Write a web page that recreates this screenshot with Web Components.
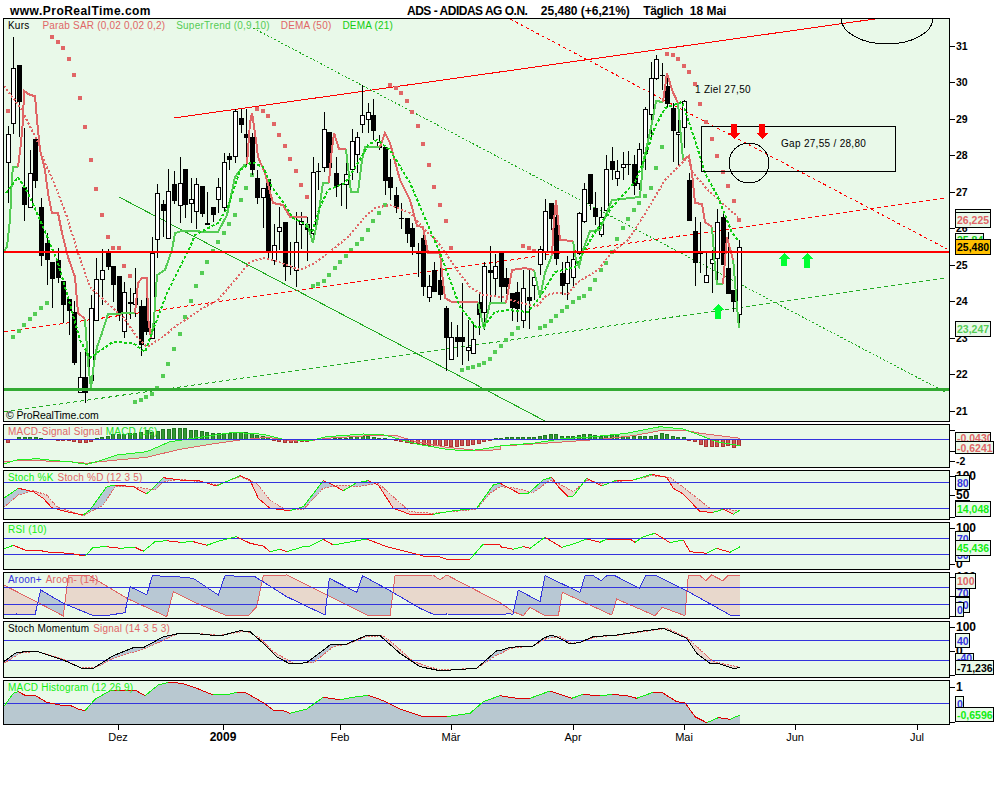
<!DOCTYPE html>
<html lang="de">
<head>
<meta charset="utf-8">
<title>ADS - ADIDAS AG O.N.</title>
<style>
  html, body { margin: 0; background: #fff; }
</style>
</head>
<body>
<chart-page>
  <chart-header></chart-header>

  <chart-pane name="main" top="18" height="404">
    <pane-legend gap="11">
      <span style="color:#000;margin-right:2px">Kurs</span>
      <span style="color:#e06666">Parab SAR (0,02 0,02 0,2)</span>
      <span style="color:#55cc55">SuperTrend (0,9 10)</span>
      <span style="color:#e06666">DEMA (50)</span>
      <span style="color:#11cc11">DEMA (21)</span>
    </pane-legend>
    <axis-mark slot="axis" y="46">31</axis-mark>
    <axis-mark slot="axis" y="82">30</axis-mark>
    <axis-mark slot="axis" y="119">29</axis-mark>
    <axis-mark slot="axis" y="155">28</axis-mark>
    <axis-mark slot="axis" y="192">27</axis-mark>
    <axis-mark slot="axis" y="228">26</axis-mark>
    <axis-mark slot="axis" y="265">25</axis-mark>
    <axis-mark slot="axis" y="301">24</axis-mark>
    <axis-mark slot="axis" y="338">23</axis-mark>
    <axis-mark slot="axis" y="374">22</axis-mark>
    <axis-mark slot="axis" y="411">21</axis-mark>
    <value-badge slot="axis" y="209" h="8" color="#e06666"></value-badge>
    <value-badge slot="axis" y="212" h="16" color="#e06666">26,225</value-badge>
    <value-badge slot="axis" y="233" h="14" w="29" color="#11cc11">25,84</value-badge>
    <value-badge slot="axis" y="239" h="16" color="#000" bg="#ffc000">25,480</value-badge>
    <value-badge slot="axis" y="321" h="16" color="#55cc55">23,247</value-badge>
  </chart-pane>

  <chart-pane name="macd" top="424" height="44">
    <pane-legend gap="3">
      <span style="color:#e06666">MACD-Signal</span>
      <span style="color:#e06666">Signal</span>
      <span style="color:#22dd22">MACD (16)</span>
    </pane-legend>
    <axis-mark slot="axis" y="430"></axis-mark>
    <axis-mark slot="axis" y="451"></axis-mark>
    <axis-mark slot="axis" y="461">-2</axis-mark>
    <value-badge slot="axis" y="432" h="12" color="#e06666">-0,0430</value-badge>
    <value-badge slot="axis" y="441" h="13" w="39" color="#e06666">-0,6241</value-badge>
  </chart-pane>

  <chart-pane name="stoch" top="470" height="50">
    <pane-legend gap="4">
      <span style="color:#11ee11">Stoch %K</span>
      <span style="color:#e06666">Stoch %D (12 3 5)</span>
    </pane-legend>
    <axis-mark slot="axis" y="476" big>100</axis-mark>
    <axis-mark slot="axis" y="495" big>50</axis-mark>
    <axis-mark slot="axis" y="517"></axis-mark>
    <value-badge slot="axis" y="475" h="15" w="15" color="#3333dd">80</value-badge>
    <value-badge slot="axis" y="500" h="6" w="15" color="#3333dd"></value-badge>
    <value-badge slot="axis" y="501" h="16" color="#11ee11">14,048</value-badge>
  </chart-pane>

  <chart-pane name="rsi" top="522" height="48">
    <pane-legend>
      <span style="color:#11ee11">RSI (10)</span>
    </pane-legend>
    <axis-mark slot="axis" y="528" big>100</axis-mark>
    <axis-mark slot="axis" y="564" big>0</axis-mark>
    <value-badge slot="axis" y="531" h="15" w="15" color="#3333dd">70</value-badge>
    <value-badge slot="axis" y="547" h="15" w="15" color="#3333dd">30</value-badge>
    <value-badge slot="axis" y="540" h="16" color="#11ee11">45,436</value-badge>
  </chart-pane>

  <chart-pane name="aroon" top="572" height="47">
    <pane-legend gap="4">
      <span style="color:#3333dd">Aroon+</span>
      <span style="color:#e06666">Aroon- (14)</span>
    </pane-legend>
    <axis-mark slot="axis" y="577" big>100</axis-mark>
    <axis-mark slot="axis" y="596"></axis-mark>
    <axis-mark slot="axis" y="616"></axis-mark>
    <value-badge slot="axis" y="588" h="9" w="15" color="#3333dd">70</value-badge>
    <value-badge slot="axis" y="597" h="16" w="15" color="#3333dd">30</value-badge>
    <value-badge slot="axis" y="602" h="15" w="9" color="#3333dd">0</value-badge>
    <value-badge slot="axis" y="573" h="16" w="21" color="#e06666">100</value-badge>
  </chart-pane>

  <chart-pane name="mom" top="621" height="57">
    <pane-legend gap="4">
      <span style="color:#000">Stoch Momentum</span>
      <span style="color:#e06666">Signal (14 3 5 3)</span>
    </pane-legend>
    <axis-mark slot="axis" y="627" big>100</axis-mark>
    <axis-mark slot="axis" y="651" big>0</axis-mark>
    <axis-mark slot="axis" y="675"></axis-mark>
    <value-badge slot="axis" y="633" h="15" w="15" color="#3333dd">40</value-badge>
    <value-badge slot="axis" y="653" h="10" w="19" color="#3333dd">-40</value-badge>
    <value-badge slot="axis" y="660" h="15" w="39" color="#000">-71,236</value-badge>
  </chart-pane>

  <chart-pane name="hist" top="680" height="45">
    <pane-legend>
      <span style="color:#11ee11">MACD Histogram (12 26 9)</span>
    </pane-legend>
    <axis-mark slot="axis" y="687" big>1</axis-mark>
    <axis-mark slot="axis" y="722"></axis-mark>
    <value-badge slot="axis" y="696" h="15" w="9" color="#3333dd">0</value-badge>
    <value-badge slot="axis" y="707" h="15" w="39" color="#11ee11">-0,6596</value-badge>
  </chart-pane>

  <date-axis></date-axis>
</chart-page>

<script>
const PINK = "#e06666";
const SOFT_GREEN = "#55cc55";
const DEMA_GREEN = "#11cc11";
const BLUE = "#3333dd";
const UP = "#11ee11";
const DOWN = "#ee1111";

// all curves are written in 3x crop coordinates, then moved back onto the page
const crop = (ox, oy, pts) => pts.map(([x, y]) => [ox + x / 3, oy + y / 3]);
const barX = (i) => 8 + 5.54 * i;

function yAt(pts, x) {
  if (x <= pts[0][0]) return pts[0][1];
  for (let i = 1; i < pts.length; i++) {
    if (x <= pts[i][0]) {
      const [x0, y0] = pts[i - 1];
      const [x1, y1] = pts[i];
      return x1 === x0 ? y1 : y0 + ((y1 - y0) * (x - x0)) / (x1 - x0);
    }
  }
  return pts[pts.length - 1][1];
}

function line(pts, color, width = 1, dash = "") {
  const d = pts.map((p) => p[0].toFixed(1) + "," + p[1].toFixed(1)).join(" ");
  return `<polyline points="${d}" fill="none" stroke="${color}" stroke-width="${width}" stroke-dasharray="${dash}"/>`;
}

function seg(x1, y1, x2, y2, color, width = 1, dash = "") {
  return `<line x1="${x1}" y1="${y1}" x2="${x2}" y2="${y2}" stroke="${color}" stroke-width="${width}" stroke-dasharray="${dash}"/>`;
}

// green on the way up, red on the way down
function trendLine(pts, up = UP, down = DOWN) {
  let out = "";
  for (let i = 1; i < pts.length; i++) {
    out += line([pts[i - 1], pts[i]], pts[i][1] < pts[i - 1][1] ? up : down, 1);
  }
  return out;
}

// column fill between two curves, colour depends on which one is on top
function band(a, b, colA, colB, x0, x1) {
  let pa = "", pb = "";
  for (let x = x0; x < x1; x++) {
    const ya = yAt(a, x + 0.5);
    const yb = yAt(b, x + 0.5);
    const rect = `M${x} ${Math.min(ya, yb).toFixed(1)}h1V${Math.max(ya, yb).toFixed(1)}h-1z`;
    if (ya < yb) pa += rect; else pb += rect;
  }
  return `<path d="${pa}" fill="${colA}"/><path d="${pb}" fill="${colB}"/>`;
}

function hLine(y, x1 = 4, x2 = 949, color = BLUE, width = 1) {
  return `<rect x="${x1}" y="${y}" width="${x2 - x1}" height="${width}" fill="${color}"/>`;
}

function arrow(x, y1, y2, color) {
  const dir = y2 > y1 ? 1 : -1;
  const neck = y2 - dir * 6;
  return `<polygon points="${x - 3},${y1} ${x + 3},${y1} ${x + 3},${neck} ${x + 6},${neck} ${x},${y2} ${x - 6},${neck} ${x - 3},${neck}" fill="${color}"/>`;
}

// x, high, body top, body bottom, low, black?
const CANDLES = [
  [8,126,134,162,203,0],[13,37,68,123,134,0],[19,65,65,102,137,1],[24,128,187,205,221,1],[30,150,173,207,207,0],
  [35,139,139,181,188,1],[41,198,207,256,266,1],[47,233,243,260,285,1],[52,262,262,279,308,1],[58,248,260,278,283,1],
  [63,281,281,305,323,1],[69,299,299,311,335,1],[74,301,312,363,365,1],[80,352,377,392,392,0],[85,352,377,393,403,1],
  [91,295,308,380,380,0],[96,258,279,320,320,0],[102,249,270,279,305,0],[108,249,253,267,270,1],[113,266,266,285,302,1],
  [119,276,276,313,321,1],[124,282,292,331,338,0],[130,288,302,304,319,1],[135,268,293,304,317,0],[141,300,306,345,356,1],
  [146,295,306,332,335,1],[152,237,253,338,338,0],[157,184,193,239,258,0],[163,200,204,211,237,1],[168,169,191,238,238,0],
  [174,171,184,201,204,1],[180,157,183,205,223,0],[185,169,169,205,218,1],[191,178,199,203,223,0],[196,178,184,211,229,0],
  [202,186,186,214,217,1],[207,192,223,225,225,1],[213,207,207,215,222,1],[218,178,187,199,213,0],[224,153,162,207,212,0],
  [229,153,156,160,170,1],[235,109,111,156,163,0],[241,109,118,125,133,1],[246,109,134,138,165,1],[252,133,137,170,175,1],
  [257,170,178,198,204,1],[263,188,188,197,228,0],[268,179,179,253,260,1],[274,224,245,260,265,0],[279,207,227,231,250,0],
  [285,222,222,267,281,1],[290,242,266,267,275,1],[296,212,242,270,287,0],[301,212,221,224,249,0],[307,217,224,230,261,1],
  [313,157,172,233,242,0],[318,163,171,172,190,1],[324,112,129,167,172,0],[329,132,132,168,173,1],[336,157,173,187,197,1],
  [341,183,184,185,206,1],[346,158,174,184,209,0],[352,129,141,169,180,0],[357,132,137,154,173,0],[362,85,115,124,133,0],
  [368,103,112,119,133,0],[373,99,115,131,140,1],[379,135,142,147,150,0],[385,147,147,181,195,1],[390,159,177,188,200,1],
  [396,187,195,208,213,1],[401,203,218,219,229,1],[407,218,218,234,243,1],[412,223,228,247,255,1],[418,243,253,254,277,1],
  [423,233,238,287,296,1],[429,275,286,297,302,0],[434,262,270,292,292,1],[440,255,280,295,300,1],[446,306,308,338,371,1],
  [451,322,337,359,360,0],[457,325,337,342,357,1],[462,283,337,342,365,1],[468,320,347,350,361,0],[473,324,339,353,353,0],
  [479,293,302,315,335,1],[484,262,266,312,330,0],[490,246,270,273,303,1],[495,254,266,278,297,0],[501,253,253,287,303,1],
  [506,268,278,287,294,1],[512,293,293,308,321,1],[517,282,292,309,322,1],[523,270,288,320,328,0],[529,270,297,301,329,1],
  [534,271,277,285,300,0],[540,246,249,264,275,0],[545,199,211,251,260,0],[551,203,203,219,230,1],[556,210,217,259,265,1],
  [562,262,273,286,295,1],[567,256,262,283,300,0],[573,248,259,277,288,0],[579,212,213,253,255,0],[584,183,189,221,223,0],
  [590,174,174,204,210,1],[595,192,208,217,225,1],[601,207,217,234,237,0],[606,155,169,210,212,0],[612,147,161,170,180,1],
  [617,160,171,178,186,0],[623,152,164,167,180,0],[628,151,164,165,175,1],[634,155,164,186,195,1],[639,143,149,183,190,0],
  [645,107,109,153,170,0],[651,62,78,114,137,0],[656,55,59,78,80,0],[662,63,75,76,90,1],[667,73,86,104,108,1],
  [673,103,108,131,162,1],[678,103,132,134,165,0],[684,100,101,127,148,0],[689,173,180,221,221,1],[695,217,231,263,286,1],
  [700,222,253,254,273,1],[706,253,275,282,282,0],[712,250,259,263,293,0],[717,209,222,258,280,0],[723,213,217,265,265,1],
  [728,232,268,294,294,1],[733,290,290,302,312,1],[739,240,247,314,328,0]
];

const SAR_RED = [[8,111],[52,37],[58,42],[63,48],[69,59],[74,75],[80,98],[85,127],[91,160],[96,189],[102,215],[108,237],[113,248],[119,248],[124,266],[130,276],
  [257,109],[263,111],[268,116],[274,124],[279,135],[285,146],[290,159],[296,171],[301,185],[307,197],
  [390,85],[396,88],[401,93],[407,101],[412,112],[418,126],[423,144],[429,165],[434,187],[440,205],[446,221],[451,248],
  [523,246],[529,248],[534,251],
  [667,54],[673,55],[678,59],[684,66],[689,72],[695,84],[700,104],[706,122],[712,139],[717,156],[723,172],[728,186],[734,201],[739,220]];

const SAR_GREEN = [[13,337],[19,331],[24,325],[30,319],[35,314],[41,308],[47,303],
  [135,402],[141,400],[146,397],[152,394],[157,388],[163,376],[168,364],[174,349],[180,334],[185,317],[191,301],[196,286],[202,273],[207,262],[213,251],[218,242],[224,233],[229,224],[235,215],[241,200],[246,188],[252,175],
  [313,286],[318,284],[324,281],[329,275],[335,268],[340,262],[346,256],[351,250],[357,244],[362,239],[368,230],[373,221],[379,213],[385,205],
  [462,370],[468,368],[473,367],[479,365],[484,363],[490,359],[495,352],[501,346],[506,340],[512,334],[518,328],
  [540,328],[545,326],[551,321],[556,316],[562,311],[567,307],[573,302],[579,298],[584,296],[590,289],[595,280],[601,270],[606,263],[612,252],[617,239],[623,228],[628,219],[634,210],[639,203],[645,196],[651,188],[656,168],[662,147]];

// SuperTrend flips between its green and red pieces
const TREND_GREEN = [
  [[4,251],[7,247],[10,220],[12,177],[13,167],[18,167]],
  [[85,319],[88,363],[91,388],[94,363],[97,347],[102,333],[108,314],[135,313]],
  [[151,338],[154,320],[157,275],[165,270],[172,250],[175,233],[182,231],[218,232],[227,215],[235,177],[245,164]],
  [[307,223],[313,243],[318,217],[323,183],[329,183]],
  [[346,149],[348,167],[351,192],[358,192],[362,160],[365,147],[380,147]],
  [[478,302],[484,329],[490,303],[506,303]],
  [[534,270],[540,297],[545,273],[552,255]],
  [[573,241],[576,260],[579,267],[583,250],[590,231],[600,230],[612,200],[640,197],[643,163],[652,123],[656,101],[663,102]],
  [[678,103],[683,160]],
  [[712,227],[715,267],[717,284],[723,284]],
  [[733,258],[737,307],[739,328]]
];
const TREND_RED = [
  [[18,167],[21,143],[23,120],[24,91],[30,95],[35,96],[37,120],[40,150],[45,170],[48,193],[52,213],[58,213],[62,233],[68,257],[75,277],[78,313],[85,319]],
  [[135,313],[138,283],[142,278],[147,278],[148,317],[151,338]],
  [[247,164],[250,123],[252,113],[256,140],[258,157],[265,173],[273,203],[283,205],[290,217],[307,217]],
  [[329,183],[331,157],[334,133],[339,149],[346,149]],
  [[380,147],[385,133],[390,143],[400,180],[410,200],[417,226],[423,227],[428,253],[440,253],[442,273],[445,298],[452,302],[478,302]],
  [[506,303],[512,270],[525,268],[534,270]],
  [[552,255],[554,220],[556,200],[558,220],[560,240],[573,241]],
  [[663,102],[667,73],[672,90],[678,103]],
  [[683,160],[689,156],[692,173],[695,203],[702,204],[705,222],[712,227]],
  [[723,284],[727,237],[733,260]]
];

const DEMA50 = [[4,86],[20,107],[37,140],[43,158],[57,190],[67,217],[78,253],[90,287],[107,303],[123,317],[137,337],[147,347],[163,337],[177,325],[190,317],[203,308],[218,300],[235,280],[250,262],[265,258],[282,263],[300,270],[315,263],[332,250],[348,237],[365,217],[375,208],[390,205],[410,213],[425,230],[438,242],[457,270],[470,287],[483,295],[503,297],[520,303],[537,306],[547,295],[555,293],[568,294],[578,282],[598,270],[612,252],[628,240],[643,217],[655,197],[665,180],[688,157],[692,172],[708,190],[722,203],[738,217]];
const DEMA21 = [[6,193],[18,177],[28,193],[40,220],[57,260],[68,297],[80,340],[90,358],[97,353],[113,342],[133,343],[145,352],[153,330],[167,293],[190,247],[195,235],[218,223],[228,207],[240,170],[252,162],[263,167],[272,187],[285,205],[293,218],[303,223],[312,232],[320,207],[328,190],[345,183],[358,163],[368,145],[377,140],[390,150],[410,183],[430,230],[440,253],[450,280],[460,307],[477,328],[485,325],[495,312],[508,310],[528,312],[540,297],[555,272],[575,267],[592,237],[612,207],[635,182],[643,163],[655,127],[665,108],[682,102],[695,140],[705,173],[718,197],[732,233],[739,241]];

function drawMain() {
  let s = "";
  s += seg(174, 118, 903, 15, "#ff0000", 1);
  s += seg(510, 19, 947, 249, "#ff0000", 1, "3 3");
  s += seg(4, 332, 947, 198, "#ff0000", 1, "4 3");
  s += seg(253, 28, 947, 393, "#22aa22", 1, "2 2");
  s += seg(4, 412, 947, 278, "#22aa22", 1, "4 3");
  s += seg(119, 197, 545, 421, "#22aa22", 1);
  for (const [x, y] of SAR_RED) s += `<rect x="${x - 2}" y="${y - 2}" width="4" height="4" fill="${PINK}"/>`;
  for (const [x, y] of SAR_GREEN) s += `<rect x="${x - 2}" y="${y - 2}" width="4" height="4" fill="${SOFT_GREEN}"/>`;
  for (const [x, high, top, bottom, low, black] of CANDLES) {
    s += seg(x + 0.5, high, x + 0.5, low, "#000");
    s += black
      ? `<rect x="${x - 2}" y="${top}" width="5" height="${Math.max(bottom - top, 1)}" fill="#000"/>`
      : `<rect x="${x - 1.5}" y="${top + 0.5}" width="4" height="${bottom - top}" fill="#fff" stroke="#000"/>`;
  }
  s += line(DEMA50, PINK, 2, "2 2");
  for (const p of TREND_GREEN) s += line(p, SOFT_GREEN, 2);
  for (const p of TREND_RED) s += line(p, PINK, 2);
  s += line(DEMA21, DEMA_GREEN, 2, "3 2");
  s += hLine(251, 4, 949, "#ff0000", 2);
  s += hLine(388, 4, 949, "#33aa33", 3);
  s += `<ellipse cx="887" cy="18" rx="46" ry="26" fill="none" stroke="#000"/>`;
  s += `<circle cx="749" cy="163" r="20" fill="none" stroke="#000"/>`;
  s += `<rect x="701.5" y="126.5" width="194" height="45" fill="none" stroke="#000"/>`;
  s += arrow(734, 124, 139, "#ff0000") + arrow(762, 124, 139, "#ff0000");
  s += arrow(784, 266, 253, "#00ff33") + arrow(807, 268, 253, "#00ff33") + arrow(718, 319, 304, "#00ff33");
  s += `<text x="695" y="93" class="note">1 Ziel 27,50</text>`;
  s += `<text x="781" y="147" class="note">Gap 27,55 / 28,80</text>`;
  s += `<text x="6" y="419" class="mark">© ProRealTime.com</text>`;
  return s;
}

// bar height above (+) or below (-) the zero line, one value per session
const MACD_BARS = [-3,0,2,2,2,2,1,0,0,-1,-1,-1,-2,-3,-3,-2,1,2,3,5,5,5,6,6,7,9,7,8,10,10,11,11,11,9,9,8,7,6,6,6,6,7,7,7,6,4,3,2,-1,-2,-3,-3,-3,-2,-2,-1,0,1,1,1,1,1,2,3,3,3,2,1,1,0,-1,-2,-3,-4,-4,-5,-6,-6,-6,-6,-7,-7,-6,-6,-5,-4,-2,-1,1,1,2,2,2,2,2,2,3,4,5,5,3,3,3,4,5,5,4,3,4,5,5,3,3,3,3,3,3,4,6,5,3,2,2,-1,-2,-5,-7,-7,-7,-7,-6,-8,-6];

function drawMacd() {
  const green = crop(0, 420, [[11,132],[50,120],[110,116],[165,122],[210,125],[260,133],[300,122],[350,105],[440,95],[510,65],[600,52],[700,37],[790,43],[850,58],[930,62],[980,50],[1090,42],[1150,44],[1250,72],[1340,88],[1400,93],[1450,87],[1500,78]])
    .concat(crop(500, 420, [[0,77],[100,70],[180,57],[280,50],[380,40],[480,20],[550,27],[590,42],[650,65],[720,77]]));
  const pink = crop(0, 420, [[11,125],[50,122],[110,122],[165,124],[210,125],[260,130],[300,125],[350,120],[440,112],[540,88],[650,70],[720,60],[800,52],[860,60],[930,62],[980,55],[1090,48],[1190,47],[1250,65],[1340,82],[1450,93],[1500,88]])
    .concat(crop(500, 420, [[0,78],[100,72],[200,65],[300,58],[400,47],[480,32],[550,30],[600,40],[720,55]]));
  let s = band(green, pink, "#bdeebd", "#e8d8d0", 4, 740);
  MACD_BARS.forEach((v, i) => {
    if (!v) return;
    const x = Math.round(barX(i)) - 2;
    s += v > 0
      ? `<rect x="${x + 0.5}" y="${439.5 - v}" width="3" height="${v}" fill="#339933" stroke="#227722"/>`
      : `<rect x="${x + 0.5}" y="439.5" width="3" height="${-v}" fill="#cc5555" stroke="#aa3333"/>`;
  });
  s += line(pink, PINK, 1) + line(green, "#22ee22", 1);
  s += hLine(439);
  return s;
}

function drawStoch() {
  const k = crop(0, 420, [[11,235],[55,205],[100,215],[130,235],[155,263],[200,275],[250,285],[270,270],[320,200],[345,195],[400,200],[440,222],[490,173],[540,180],[600,183],[650,198],[690,180],[720,167],[750,180],[775,235],[810,265],[870,272],[910,260],[970,182],[1000,195],[1030,212],[1070,188],[1105,182],[1135,195],[1180,265],[1230,283],[1300,283],[1360,272],[1430,265],[1480,195],[1500,190]])
    .concat(crop(500, 420, [[20,200],[60,222],[85,220],[130,180],[155,172],[175,200],[205,230],[220,228],[260,175],[305,198],[350,180],[400,180],[455,163],[500,172],[520,205],[550,222],[600,275],[640,277],[670,268],[700,283],[720,270]]));
  const d = crop(0, 420, [[11,262],[55,225],[100,212],[140,225],[170,260],[250,287],[310,255],[345,200],[400,200],[465,210],[490,185],[540,178],[600,185],[650,195],[720,170],[770,190],[810,240],[850,265],[910,268],[970,205],[1020,195],[1070,200],[1135,190],[1190,240],[1230,275],[1300,280],[1430,268],[1470,220],[1500,200]])
    .concat(crop(500, 420, [[50,205],[100,218],[150,180],[175,190],[220,215],[260,180],[300,190],[350,185],[400,180],[455,167],[510,172],[560,210],[630,265],[720,272]]));
  let s = band(k, d, "#b8c8d4", "#e8d8d0", 4, 740);
  s += line(d, PINK, 1, "2 1") + trendLine(k);
  s += hLine(482) + hLine(508);
  return s;
}

function drawRsi() {
  const r = crop(0, 420, [[11,387],[40,376],[75,390],[110,390],[150,397],[210,400],[255,408],[280,382],[320,380],[360,385],[405,382],[430,394],[465,365],[500,362],[540,367],[580,365],[620,376],[660,362],[710,350],[750,370],[790,378],[810,395],[840,388],[860,395],[910,380],[930,378],[970,358],[1000,375],[1100,357],[1160,380],[1240,400],[1270,408],[1310,408],[1340,418],[1410,418],[1450,372],[1500,375]])
    .concat(crop(500, 420, [[0,380],[40,388],[70,380],[90,385],[135,352],[185,382],[220,372],[260,357],[300,367],[320,357],[390,357],[405,367],[430,350],[465,340],[510,368],[550,360],[570,395],[620,400],[650,385],[690,397],[720,380]]));
  return hLine(538) + hLine(554) + trendLine(r);
}

function drawAroon() {
  const plus = crop(0, 420, [[11,585],[50,582],[95,583],[105,585],[122,510],[190,550],[275,585],[330,585],[375,578],[390,500],[440,525],[457,467],[530,470],[580,475],[655,525],[675,467],[765,470],[860,530],[975,585],[988,475],[1070,517],[1088,467],[1175,515],[1260,565],[1305,585],[1340,582],[1500,585]])
    .concat(crop(500, 420, [[30,580],[38,585],[55,510],[120,545],[135,467],[240,517],[255,467],[280,467],[303,482],[320,467],[345,467],[418,505],[437,467],[470,467],[560,512],[690,585],[720,585]]));
  const minus = crop(0, 420, [[11,495],[115,548],[190,588],[205,467],[265,465],[385,537],[500,590],[520,515],[590,550],[680,587],[745,587],[770,560],[790,467],[860,465],[980,525],[1100,585],[1170,587],[1185,467],[1300,465],[1320,480],[1340,465],[1500,548]])
    .concat(crop(500, 420, [[40,575],[70,587],[90,562],[135,587],[175,587],[187,517],[335,585],[350,537],[465,587],[487,562],[555,587],[565,467],[600,467],[618,482],[635,465],[668,482],[685,465],[720,465]]));
  let s = band(plus, minus, "#b8c8d4", "#e8d8cc", 4, 740);
  s += line(minus, PINK, 1) + line(plus, BLUE, 1);
  s += hLine(587) + hLine(604);
  return s;
}

function drawMom() {
  const black = crop(0, 610, [[11,155],[50,127],[110,124],[190,150],[250,177],[280,175],[340,137],[400,113],[430,113],[490,80],[540,70],[600,72],[660,78],[720,62],[750,65],[790,100],[830,140],[870,162],[920,158],[990,105],[1040,102],[1100,76],[1140,77],[1200,130],[1260,170],[1320,182],[1430,175],[1490,122],[1500,122]])
    .concat(crop(500, 610, [[30,112],[100,108],[130,85],[155,75],[180,85],[210,102],[240,97],[280,80],[350,75],[430,63],[490,55],[560,85],[590,130],[630,160],[660,162],[700,175],[720,173]]));
  const pink = crop(0, 610, [[11,160],[60,130],[110,124],[190,148],[240,173],[290,172],[340,145],[430,117],[470,100],[530,72],[600,71],[660,76],[740,63],[780,85],[820,125],[880,160],[940,158],[1000,110],[1040,103],[1100,80],[1150,77],[1190,110],[1240,155],[1320,180],[1430,175],[1490,135],[1500,132]])
    .concat(crop(500, 610, [[30,115],[100,108],[140,85],[180,80],[215,100],[250,95],[280,82],[350,76],[430,65],[500,55],[560,82],[640,155],[720,172]]));
  let s = band(black, pink, "#b8c8d4", "#e8d8d0", 4, 740);
  s += hLine(640) + hLine(660);
  s += line(pink, PINK, 1, "2 1") + line(black, "#000", 1);
  return s;
}

function drawHist() {
  const h = crop(0, 610, [[11,290],[40,250],[55,245],[75,256],[105,256],[140,277],[180,285],[210,286],[235,297],[255,302],[285,268],[330,242],[410,243],[435,257],[475,225],[505,217],[545,220],[590,235],[640,255],[690,252],[710,247],[735,247],[790,278],[820,300],[850,302],[870,310],[920,297],[970,262],[1020,269],[1060,262],[1105,256],[1150,272],[1200,297],[1270,320],[1340,320],[1410,310],[1450,275],[1500,257]])
    .concat(crop(500, 610, [[50,265],[90,265],[150,243],[215,265],[250,253],[300,258],[335,253],[380,257],[410,265],[460,247],[485,247],[530,275],[555,278],[585,320],[620,338],[655,323],[690,328],[720,315]]));
  const area = h.concat([[740, 724], [4, 724]]);
  const d = area.map((p) => p[0].toFixed(1) + "," + p[1].toFixed(1)).join(" ");
  return `<polygon points="${d}" fill="#b8c8d0"/>` + hLine(703) + trendLine(h, UP, "#dd0000");
}

const DRAWINGS = { main: drawMain, macd: drawMacd, stoch: drawStoch, rsi: drawRsi, aroon: drawAroon, mom: drawMom, hist: drawHist };

class ChartPage extends HTMLElement {
  constructor() {
    super();
    this.attachShadow({ mode: "open" });
    this.shadowRoot.innerHTML = `
      <style>
        :host {
          display: flex;
          flex-direction: column;
          gap: 2px;
          width: 1000px;
          height: 800px;
          padding-left: 3px;
          box-sizing: border-box;
          overflow: hidden;
          font-family: "Liberation Sans", Arial, sans-serif;
        }
      </style>
      <slot></slot>
    `;
  }
}

class ChartHeader extends HTMLElement {
  constructor() {
    super();
    this.attachShadow({ mode: "open" });
    this.shadowRoot.innerHTML = `
      <style>
        :host {
          display: grid;
          grid-template-columns: 404px 1fr;
          align-items: center;
          box-sizing: border-box;
          height: 16px;
          padding-top: 4px;
          font: bold 12px "Liberation Sans", Arial, sans-serif;
          color: #000;
          white-space: pre;
        }
        .site { padding-left: 7px; letter-spacing: 0.47px; }
        .name { letter-spacing: -0.5px; }
        .period { letter-spacing: -0.3px; }
      </style>
      <span class="site">www.ProRealTime.com</span>
      <span><span class="name">ADS - ADIDAS AG O.N.</span>    25,480 (+6,21%)    <span class="period">Täglich</span>  18 Mai</span>
    `;
  }
}

class ChartPane extends HTMLElement {
  constructor() {
    super();
    this.attachShadow({ mode: "open" });
  }

  connectedCallback() {
    const name = this.getAttribute("name");
    const top = Number(this.getAttribute("top"));
    const height = Number(this.getAttribute("height"));
    this.shadowRoot.innerHTML = `
      <style>
        :host {
          display: grid;
          grid-template-columns: 947px 1fr;
          height: ${height}px;
          flex: none;
        }
        .plot {
          position: relative;
          box-sizing: border-box;
          border: 1px solid #000;
          background: #e9f9e9;
        }
        .axis { position: relative; }
        svg { display: block; shape-rendering: crispEdges; }
        .note { font-size: 10px; letter-spacing: 0.3px; fill: #000; }
        .mark { font-size: 10.5px; letter-spacing: -0.1px; fill: #000; }
        text { font-family: "Liberation Sans", Arial, sans-serif; }
      </style>
      <div class="plot">
        <svg width="945" height="${height - 2}" viewBox="4 ${top + 1} 945 ${height - 2}">${DRAWINGS[name]()}</svg>
        <slot></slot>
      </div>
      <div class="axis"><slot name="axis"></slot></div>
    `;
  }
}

class PaneLegend extends HTMLElement {
  constructor() {
    super();
    this.attachShadow({ mode: "open" });
  }

  connectedCallback() {
    this.shadowRoot.innerHTML = `
      <style>
        :host {
          position: absolute;
          left: 4px;
          top: 0;
          display: flex;
          gap: ${this.getAttribute("gap") || 4}px;
          font-size: 10px;
          line-height: 13px;
          letter-spacing: 0.2px;
          white-space: pre;
        }
      </style>
      <slot></slot>
    `;
  }
}

// tick plus its price or scale value, placed where the scale puts it
class AxisMark extends HTMLElement {
  constructor() {
    super();
    this.attachShadow({ mode: "open" });
  }

  connectedCallback() {
    const top = Number(this.parentElement.getAttribute("top"));
    const y = Number(this.getAttribute("y")) - top;
    const size = this.hasAttribute("big") ? 12 : 10.5;
    this.shadowRoot.innerHTML = `
      <style>
        :host {
          position: absolute;
          left: 0;
          top: ${y}px;
          height: 0;
          display: flex;
          align-items: center;
          gap: 1px;
          font: bold ${size}px "Liberation Sans", Arial, sans-serif;
          color: #000;
        }
        i { display: block; width: 5px; height: 1px; background: #000; }
      </style>
      <i></i><slot></slot>
    `;
  }
}

class ValueBadge extends HTMLElement {
  constructor() {
    super();
    this.attachShadow({ mode: "open" });
  }

  connectedCallback() {
    const top = Number(this.parentElement.getAttribute("top"));
    const y = Number(this.getAttribute("y")) - top;
    const h = this.getAttribute("h");
    const w = this.getAttribute("w") || 36;
    this.shadowRoot.innerHTML = `
      <style>
        :host {
          position: absolute;
          left: 5px;
          top: ${y}px;
          box-sizing: border-box;
          width: ${w}px;
          height: ${h}px;
          display: flex;
          align-items: center;
          overflow: hidden;
          border: 1px solid #000;
          background: ${this.getAttribute("bg") || "#e9f9e9"};
          color: ${this.getAttribute("color")};
          font: bold 10.5px "Liberation Sans", Arial, sans-serif;
          white-space: pre;
        }
        span { padding-left: 1px; }
      </style>
      <span><slot></slot></span>
    `;
  }
}

class DateAxis extends HTMLElement {
  constructor() {
    super();
    this.attachShadow({ mode: "open" });
  }

  connectedCallback() {
    const dates = [[118, "Dez"], [223, "2009", 1], [340, "Feb"], [451, "Mär"], [573, "Apr"], [684, "Mai"], [795, "Jun"], [917, "Jul"]];
    let s = "";
    for (const [x, label, bold] of dates) {
      s += `<rect x="${x}" y="0" width="1" height="5" fill="#000"/>`;
      s += `<text x="${x}" y="16" text-anchor="middle" class="${bold ? "bold" : ""}">${label}</text>`;
    }
    this.shadowRoot.innerHTML = `
      <style>
        :host { display: block; height: 22px; margin-top: -2px; margin-left: -3px; }
        svg { display: block; }
        text { font: 11px "Liberation Sans", Arial, sans-serif; fill: #000; }
        .bold { font-weight: bold; font-size: 12px; }
      </style>
      <svg width="1000" height="22">${s}</svg>
    `;
  }
}

customElements.define("chart-page", ChartPage);
customElements.define("chart-header", ChartHeader);
customElements.define("chart-pane", ChartPane);
customElements.define("pane-legend", PaneLegend);
customElements.define("axis-mark", AxisMark);
customElements.define("value-badge", ValueBadge);
customElements.define("date-axis", DateAxis);
</script>
</body>
</html>
